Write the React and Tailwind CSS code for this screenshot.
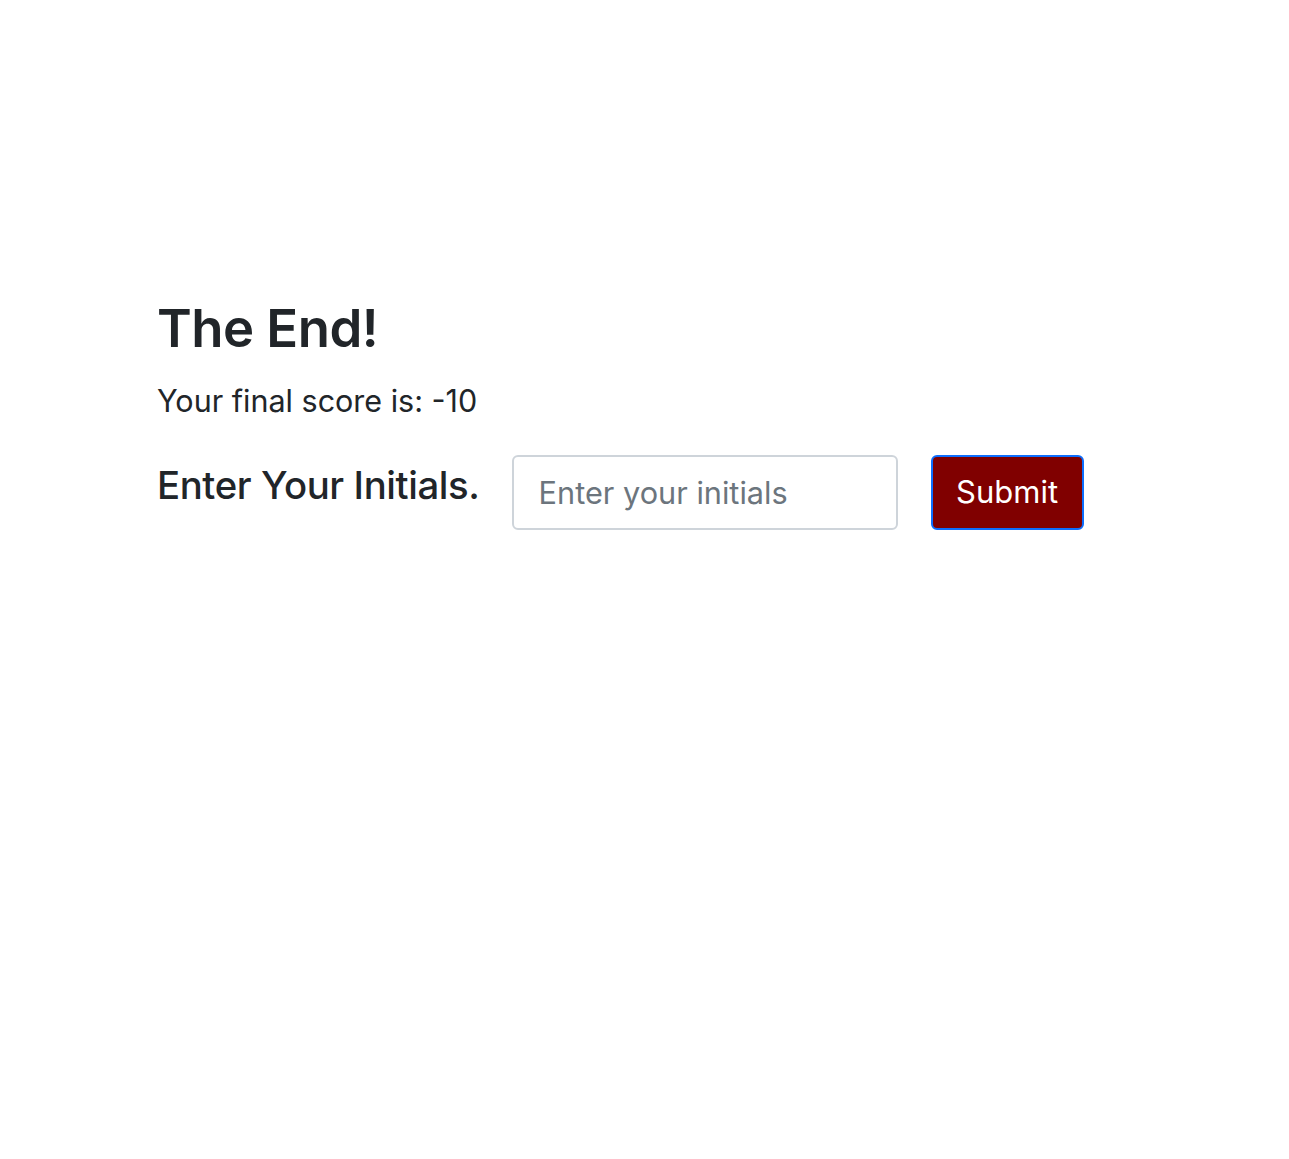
import React, { useState } from "react";

const App = () => {
  const [initials, setInitials] = useState("");

  return (
    <div className="min-h-screen bg-white font-['Inter','Noto_Sans',sans-serif] text-[#212529]">
      <div className="pl-[157px] pt-[297px]">
        <h1 className="text-[52.7px] font-semibold leading-[1.2] tracking-[-0.01em]">The End!</h1>
        <p className="mt-[18px] text-[30.5px] leading-[1.5]">Your final score is: -10</p>
        <div className="mt-[31px] flex items-start gap-[32px]">
          <h3 className="mt-[8px] text-[38.3px] font-medium leading-[1.2] tracking-[-0.01em]">Enter Your Initials.</h3>
          <input
            type="text"
            value={initials}
            onChange={(e) => setInitials(e.target.value)}
            placeholder="Enter your initials"
            className="h-[75px] w-[386px] rounded-[6px] border-2 border-[#ced4da] px-[25px] text-[30.7px] text-[#212529] placeholder:text-[#6c757d] outline-none"
          />
          <button className="ml-px h-[75px] w-[153px] rounded-[6px] border-2 border-[#0d6efd] bg-[#800000] text-[31px] text-white">
            Submit
          </button>
        </div>
      </div>
    </div>
  );
};

export default App;
